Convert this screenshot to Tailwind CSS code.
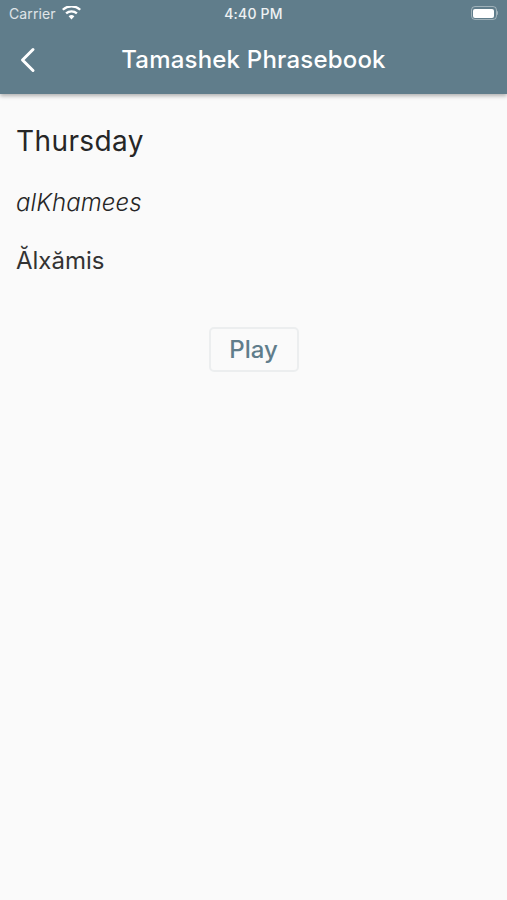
<!DOCTYPE html>
<html lang="en">
<head>
    <meta charset="UTF-8">
    <meta name="viewport" content="width=device-width, initial-scale=1.0">
    <title>Tamashek Phrasebook</title>
    <script src="https://cdn.jsdelivr.net/npm/@tailwindcss/browser@4"></script>
</head>
<body class="w-[507px] h-[900px] overflow-hidden bg-[#fafafa] font-['Inter','Roboto',sans-serif]">
    <header class="h-[94px] bg-[#607d8b] text-white shadow-[0_2px_4px_rgba(0,0,0,0.3)] flex flex-col relative">
        <!-- status bar -->
        <div class="h-[26px] grid grid-cols-3 items-center pl-[9px] pr-[9px] text-[14px]">
            <div class="flex items-center gap-[6px] text-white/80">
                <span class="tracking-[0.1px]">Carrier</span>
                <svg class="w-[19px] h-[14px] mb-[1px]" viewBox="0 0 19 14" fill="white">
                    <path d="M9.5 13.5 L6.6 10.2 A4.4 4.4 0 0 1 12.4 10.2 Z"/>
                    <path d="M4.9 8.3 L3.3 6.5 A9.4 9.4 0 0 1 15.7 6.5 L14.1 8.3 A7 7 0 0 0 4.9 8.3 Z"/>
                    <path d="M1.6 4.6 L0 2.9 A14 14 0 0 1 19 2.9 L17.4 4.6 A11.6 11.6 0 0 0 1.6 4.6 Z"/>
                </svg>
            </div>
            <div class="text-center font-medium text-white/90 tracking-[0.2px]">4:40 PM</div>
            <div class="flex justify-end">
                <div class="flex items-center">
                    <div class="w-[26px] h-[14px] rounded-[4px] border border-white/40 p-[1.5px]">
                        <div class="w-full h-full bg-white rounded-[2px]"></div>
                    </div>
                    <div class="w-[1.5px] h-[4px] bg-white/40 rounded-r-sm"></div>
                </div>
            </div>
        </div>
        <!-- nav bar -->
        <div class="flex-1 flex items-center relative">
            <svg class="w-[18px] h-[26px] ml-[19px]" viewBox="0 0 18 26" fill="none" stroke="white" stroke-width="3" stroke-linecap="round" stroke-linejoin="round">
                <path d="M14 2.5 L3.5 13 L14 23.5"/>
            </svg>
            <h1 class="absolute inset-x-0 text-center text-[24px] font-medium tracking-[0.2px]">Tamashek Phrasebook</h1>
        </div>
    </header>

    <main class="pt-[28px] px-[16px]">
        <p class="text-[28px] leading-[38px] tracking-[0.4px] text-[#262626]">Thursday</p>
        <p class="mt-[27px] text-[24px] leading-[32px] italic font-light tracking-[0.1px] text-[#262626]">alKhamees</p>
        <p class="mt-[26px] text-[24px] leading-[32px] text-[#333333]">Ălxămis</p>
        <div class="mt-[50px] flex justify-center">
            <button class="w-[90px] h-[45px] rounded-[5px] border-2 border-[#eceeef] text-[24px] font-medium text-[#607d8b]">Play</button>
        </div>
    </main>
</body>
</html>
